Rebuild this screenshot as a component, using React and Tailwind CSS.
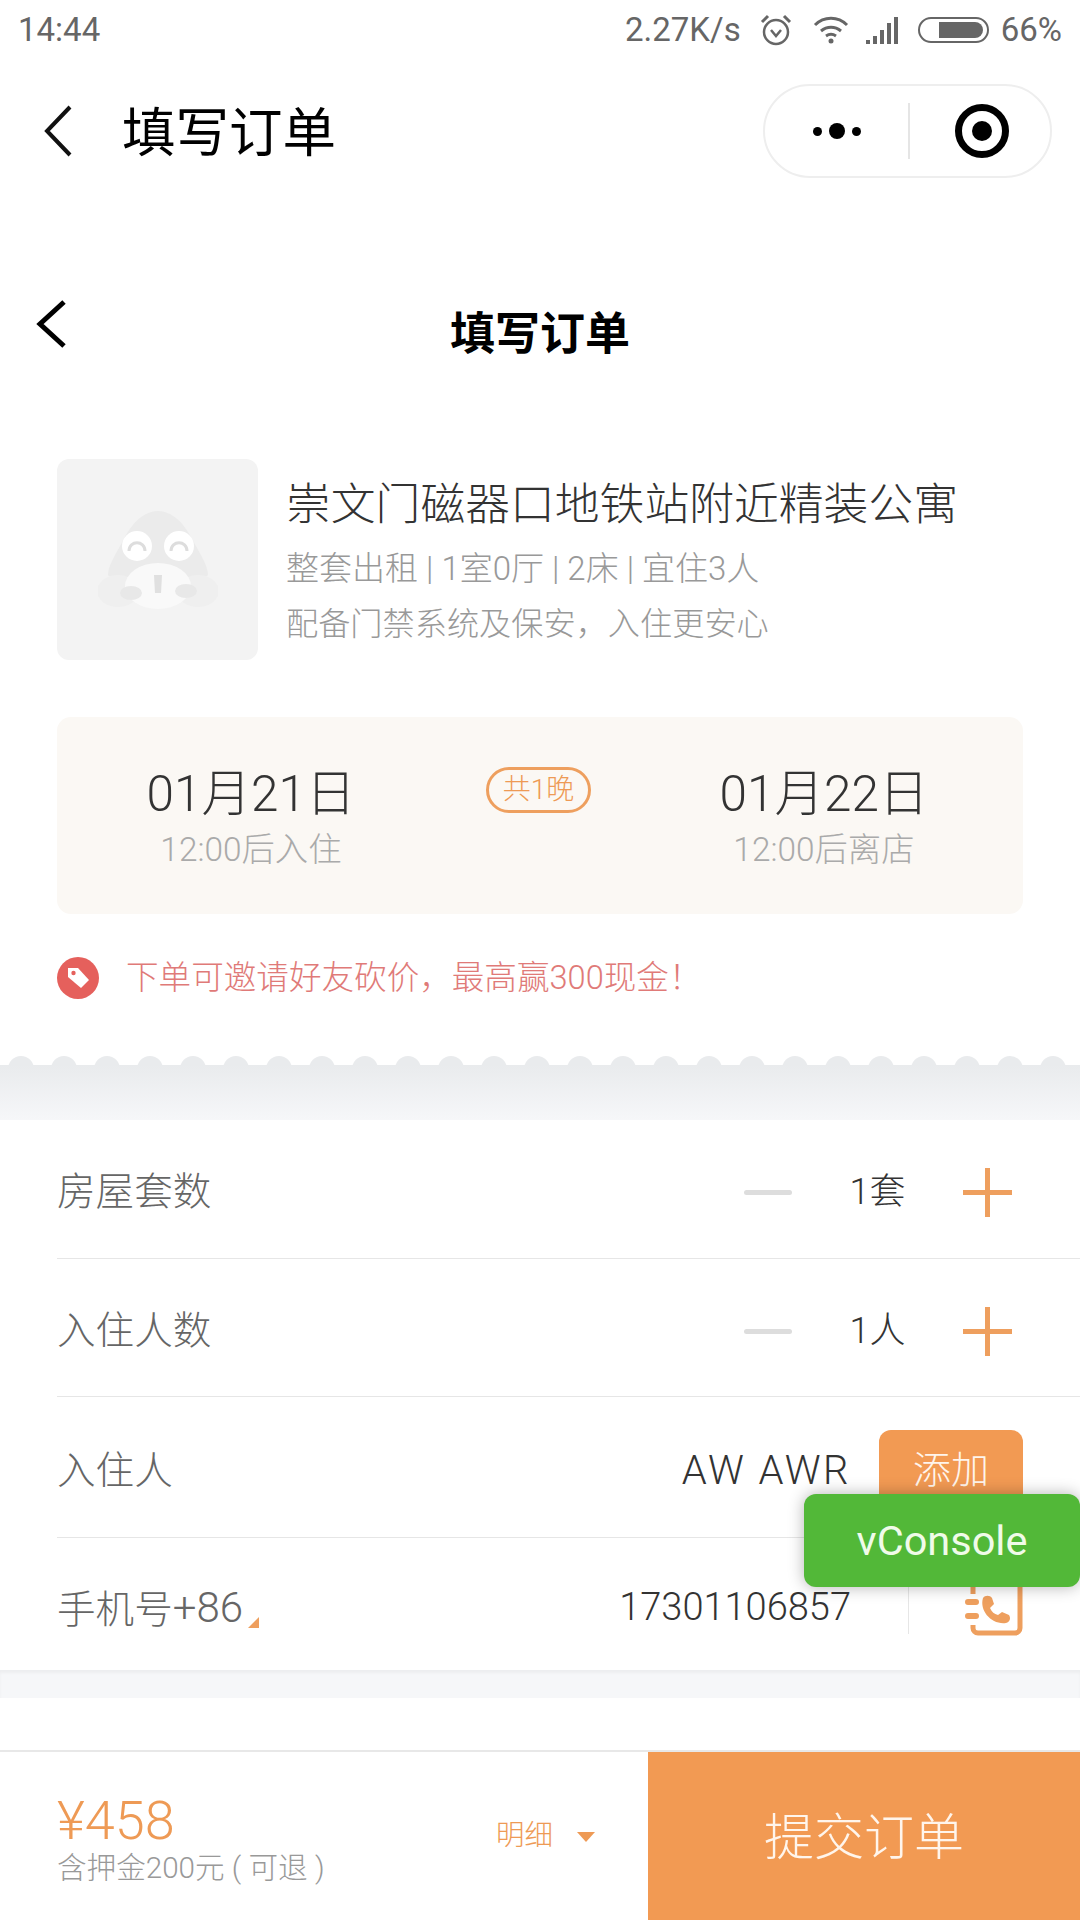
const BUMPS = Array.from({ length: 26 });

function StatusBar() {
  return (
    <div className="flex h-[60px] items-center justify-between px-[18px] text-[33px] font-normal text-[#666]">
      <span>14:44</span>
      <div className="flex items-center">
        <span>2.27K/s</span>
        <svg className="ml-[18px]" width="34" height="34" viewBox="0 0 34 34" fill="none" stroke="#666" strokeWidth="2.5">
          <circle cx="17" cy="19" r="12" />
          <path d="M12 17l5 6 5-6" />
          <path d="M3 9l6-6M31 9l-6-6" strokeWidth="3" />
        </svg>
        <svg className="ml-[19px]" width="38" height="30" viewBox="0 0 36 30" fill="none" stroke="#666" strokeWidth="3">
          <path d="M2 10c9-9 23-9 32 0" />
          <path d="M8 16c6-5 14-5 20 0" />
          <path d="M13 21c3-2 7-2 10 0" />
          <circle cx="18" cy="26" r="2.5" fill="#666" stroke="none" />
        </svg>
        <svg className="ml-[15px]" width="40" height="28" viewBox="0 0 38 28" fill="#666">
          <path d="M0 24h4v4H0zM7 20h4v8H7zM14 14h4v14h-4zM21 7h4v21h-4zM28 1h4v27h-4z" />
        </svg>
        <div className="ml-[13px] flex h-[26px] w-[71px] items-center justify-end rounded-full border-2 border-[#666] pr-[4px]">
          <div className="h-[16px] w-[44px] rounded-r-full bg-[#666]" />
        </div>
        <span className="ml-[12px]">66%</span>
      </div>
    </div>
  );
}

function NavBar() {
  return (
    <div className="flex h-[142px] items-center justify-between pr-[28px] font-normal">
      <div className="flex items-center">
        <svg className="ml-[42px]" width="32" height="54" viewBox="0 0 32 54" fill="none" stroke="#111" strokeWidth="4">
          <path d="M28 3L5 27l23 24" />
        </svg>
        <span className="ml-[48px] mt-[5px] text-[53.5px] leading-none text-black">填写订单</span>
      </div>
      <div className="flex h-[94px] w-[289px] items-center rounded-full border-2 border-[#eee]">
        <div className="flex w-[143px] items-center justify-center gap-[7px]">
          <span className="h-[9px] w-[9px] rounded-full bg-black" />
          <span className="h-[16px] w-[16px] rounded-full bg-black" />
          <span className="h-[9px] w-[9px] rounded-full bg-black" />
        </div>
        <div className="h-[56px] w-[2px] bg-[#e5e5e5]" />
        <div className="flex flex-1 items-center justify-center pl-[4px]">
          <div className="flex h-[54px] w-[54px] items-center justify-center rounded-full border-[7px] border-black">
            <span className="h-[20px] w-[20px] rounded-full bg-black" />
          </div>
        </div>
      </div>
    </div>
  );
}

function PageHeader() {
  return (
    <div className="relative flex h-[198px] justify-center pt-[110px] font-bold">
      <svg className="absolute left-[35px] top-[97px]" width="32" height="50" viewBox="0 0 32 50" fill="none" stroke="#000" strokeWidth="5">
        <path d="M29 3L5 25l24 22" />
      </svg>
      <span className="text-[45px] leading-none text-black">填写订单</span>
    </div>
  );
}

// placeholder mascot in the empty house picture
function Frog() {
  return (
    <svg width="120" height="98" viewBox="0 0 120 98">
      <path d="M60 0c14 0 26 12 34 28 7 13 16 26 16 36 0 6-100 6-100 0 0-10 9-23 16-36C34 12 46 0 60 0z" fill="#ebebeb" />
      <ellipse cx="20" cy="80" rx="21" ry="16" fill="#efefef" />
      <ellipse cx="100" cy="80" rx="21" ry="16" fill="#efefef" />
      <circle cx="39" cy="35" r="15" fill="#fff" />
      <circle cx="81" cy="35" r="15" fill="#fff" />
      <path d="M31 40c0-11 16-11 16 0M73 40c0-11 16-11 16 0" fill="none" stroke="#ddd" strokeWidth="3" />
      <ellipse cx="60" cy="75" rx="33" ry="23" fill="#f9f9f9" />
      <path d="M56 64h8l-1 18h-6z" fill="#e0e0e0" />
      <ellipse cx="33" cy="82" rx="11" ry="7" fill="#e8e8e8" />
      <ellipse cx="88" cy="80" rx="11" ry="7" fill="#e8e8e8" />
    </svg>
  );
}

function HouseCard() {
  return (
    <div className="ml-[57px] mt-[59px] flex">
      <div className="flex h-[201px] w-[201px] items-center justify-center rounded-[12px] bg-[#f3f3f3]">
        <Frog />
      </div>
      <div className="ml-[28px] flex flex-col">
        <div className="mt-[20px] text-[44.8px] leading-[52px] text-[#333]">崇文门磁器口地铁站附近精装公寓</div>
        <div className="mt-[18px] text-[33px] leading-[40px] text-[#999]">整套出租 | 1室0厅 | 2床 | 宜住3人</div>
        <div className="mt-[15px] text-[32.2px] leading-[40px] text-[#999]">配备门禁系统及保安，入住更安心</div>
      </div>
    </div>
  );
}

function DateBox() {
  return (
    <div className="ml-[57px] mt-[57px] flex h-[197px] w-[966px] rounded-[14px] bg-[#fbf8f4]">
      <div className="flex w-[388px] flex-col items-center pt-[49px]">
        <span className="text-[49.5px] leading-[56px] text-[#333]">01月21日</span>
        <span className="mt-[8px] text-[33.4px] leading-[40px] text-[#aaa]">12:00后入住</span>
      </div>
      <div className="ml-[41px] mt-[50px] flex h-[46px] w-[105px] items-center justify-center rounded-full border-[3px] border-[#ee9f5e] text-[28px] text-[#ee9a55]">
        共1晚
      </div>
      <div className="ml-[117px] flex w-[232px] flex-col items-center pt-[49px]">
        <span className="text-[49.5px] leading-[56px] text-[#333]">01月22日</span>
        <span className="mt-[8px] text-[33.4px] leading-[40px] text-[#aaa]">12:00后离店</span>
      </div>
    </div>
  );
}

function Promo() {
  return (
    <div className="ml-[57px] mt-[43px] flex h-[42px] items-center">
      <div className="flex h-[42px] w-[42px] items-center justify-center rounded-full bg-[#e5605c]">
        <svg width="26" height="26" viewBox="0 0 26 26">
          <path d="M3 3h10l11 12-8 8L3 12z" fill="#fff" />
          <circle cx="8.5" cy="8" r="2.2" fill="#e5605c" />
        </svg>
      </div>
      <span className="ml-[27px] text-[32.6px] text-[#e07a78]">下单可邀请好友砍价，最高赢300现金！</span>
    </div>
  );
}

function Scallop() {
  return (
    <div className="mt-[57px] flex h-[64px] flex-col">
      <div className="flex h-[9px] gap-[17px] overflow-hidden pl-[8px]">
        {BUMPS.map((_, i) => (
          <span key={i} className="h-[26px] w-[26px] shrink-0 rounded-full bg-[#e9ebed]" />
        ))}
      </div>
      <div className="flex-1 bg-gradient-to-b from-[#e9ebed] to-[#f6f7f9]" />
    </div>
  );
}

function Stepper({ value }) {
  return (
    <div className="flex items-center">
      <span className="h-[5px] w-[48px] rounded-full bg-[#ddd]" />
      <span className="w-[171px] text-center text-[36px] text-[#333]">{value}</span>
      <span className="relative h-[49px] w-[49px]">
        <span className="absolute left-0 top-[22px] h-[5px] w-[49px] bg-[#ee9f5e]" />
        <span className="absolute left-[22px] top-0 h-[49px] w-[5px] bg-[#ee9f5e]" />
      </span>
    </div>
  );
}

function Rows() {
  return (
    <div className="ml-[57px] flex flex-col text-[38.6px] text-[#666]">
      <div className="flex h-[139px] items-center justify-between border-b border-[#e6e6e6] pr-[68px] pt-[6px]">
        <span>房屋套数</span>
        <Stepper value="1套" />
      </div>
      <div className="flex h-[138px] items-center justify-between border-b border-[#e6e6e6] pr-[68px] pt-[7px]">
        <span>入住人数</span>
        <Stepper value="1人" />
      </div>
      <div className="flex h-[141px] items-center justify-between border-b border-[#e6e6e6] pr-[57px] pt-[7px]">
        <span>入住人</span>
        <div className="flex items-center">
          <span className="text-[40px] tracking-[2.5px] text-[#333]">AW AWR</span>
          <div className="ml-[28px] flex h-[81px] w-[144px] items-center justify-center rounded-[12px] bg-[#f29a53] text-[38px] text-[#fff5ec]">
            添加
          </div>
        </div>
      </div>
      <div className="flex h-[132px] items-center justify-between pr-[57px] pt-[7px]">
        <span className="flex items-end">
          手机号<span className="text-[42px]">+86</span>
          <svg className="mb-[11px] ml-[5px]" width="11" height="11" viewBox="0 0 11 11">
            <path d="M11 0v11H0z" fill="#ee9f5e" />
          </svg>
        </span>
        <div className="flex items-center">
          <span className="text-[38px] text-[#333]">17301106857</span>
          <div className="mb-[16px] ml-[57px] h-[68px] w-px bg-[#e6e6e6]" />
          <svg className="ml-[56px]" width="58" height="60" viewBox="0 0 58 60" fill="none">
            <path d="M8 8v8M55 0v50a5 5 0 0 1-5 5H13a5 5 0 0 1-5-5v-3" stroke="#ee9f5e" strokeWidth="5" />
            <path d="M3 24h8M3 38h8" stroke="#ee9f5e" strokeWidth="6" strokeLinecap="round" />
            <path d="M18 20c2-3 7-3 9 0l2 6-4 4c2 4 4 6 8 7l4-3 7 3c2 3 1 7-3 8-14 2-27-12-23-25z" fill="#ee9f5e" />
          </svg>
        </div>
      </div>
    </div>
  );
}

function Footer() {
  return (
    <div className="flex h-[170px] border-t-2 border-[#e8e8e8] bg-white">
      <div className="flex w-[648px] items-start pl-[57px]">
        <div className="flex w-[439px] flex-col pt-[40px]">
          <span className="text-[54px] leading-[58px] text-[#ee9a55]">¥458</span>
          <span className="text-[29.6px] leading-[36px] text-[#999]">含押金200元 ( 可退 )</span>
        </div>
        <span className="mt-[66px] text-[28.5px] leading-[36px] text-[#ee9a55]">明细</span>
        <svg className="ml-[24px] mt-[80px]" width="18" height="10" viewBox="0 0 18 10">
          <path d="M0 0h18L9 10z" fill="#ee9a55" />
        </svg>
      </div>
      <div className="flex flex-1 items-center justify-center bg-[#f29a53] pt-[4px] text-[50px] text-[#fff5ec]">
        提交订单
      </div>
    </div>
  );
}

export default function App() {
  return (
    <div className="relative flex h-[1920px] w-[1080px] flex-col overflow-hidden bg-white font-['Roboto','Noto_Sans_CJK_SC',sans-serif] font-light">
      <StatusBar />
      <NavBar />
      <PageHeader />
      <HouseCard />
      <DateBox />
      <Promo />
      <Scallop />
      <Rows />
      <div className="h-[28px] bg-[#f6f7f9] shadow-[inset_0_3px_3px_rgba(0,0,0,0.04)]" />
      <div className="h-[52px]" />
      <Footer />

      <div className="absolute left-[804px] top-[1494px] flex h-[93px] w-[276px] items-center justify-center rounded-[12px] bg-[#52b838] pt-[2px] text-[41.5px] font-normal text-[#f0fbe9] shadow-[0_0_16px_rgba(0,0,0,0.3)]">
        vConsole
      </div>
    </div>
  );
}
